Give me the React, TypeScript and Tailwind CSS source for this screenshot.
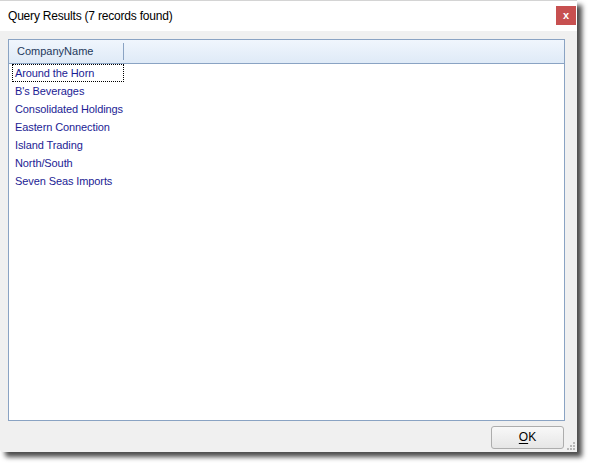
import React from "react";

const companies = [
  "Around the Horn",
  "B's Beverages",
  "Consolidated Holdings",
  "Eastern Connection",
  "Island Trading",
  "North/South",
  "Seven Seas Imports",
];

// Query results dialog
const App = () => {
  return (
    <div className="w-[592px] h-[468px] bg-white font-['Liberation_Sans',Arial,sans-serif]">
      <div className="w-[577px] h-[452px] flex flex-col bg-[#f0f0f0] rounded-bl-[3px] shadow-[5px_5px_5px_rgba(0,0,0,0.7)]">
        {/* Title bar */}
        <div className="h-[31px] shrink-0 flex items-center justify-between bg-white border-t border-[#d4d4d4] pl-2 pr-[1px]">
          <span className="text-[12px] tracking-[-0.2px] text-black leading-none pb-[1px]">
            Query Results (7 records found)
          </span>
          <button
            type="button"
            className="w-[20px] h-[19px] mt-[-2px] flex items-center justify-center bg-[#c75050] text-white text-[11px] font-bold leading-none"
          >
            x
          </button>
        </div>

        {/* Grid */}
        <div className="flex-1 flex flex-col pl-2 pr-3 pt-2">
          <div className="h-[382px] flex flex-col bg-white border border-[#8aa3c3]">
            <div className="h-[24px] shrink-0 flex items-center bg-gradient-to-b from-[#f0f6fd] to-[#dfeaf7] border-b border-[#8aa3c3]">
              <div className="w-[115px] h-[17px] flex items-center pl-2 border-r border-[#8aa3c3] text-[11px] text-[#1e395b]">
                CompanyName
              </div>
            </div>
            <div className="flex flex-col">
              {companies.map((name, i) => (
                <div key={name} className="h-[18px] flex items-center pl-[3px]">
                  <span
                    className={`min-w-[112px] h-[18px] flex items-center pl-[2px] whitespace-nowrap text-[11px] tracking-[-0.1px] text-[#1c1c94] ${
                      i === 0 ? "border border-dotted border-black" : "border border-transparent"
                    }`}
                  >
                    {name}
                  </span>
                </div>
              ))}
            </div>
          </div>

          {/* Footer */}
          <div className="flex-1 flex items-center justify-end relative">
            <button
              type="button"
              className="w-[73px] h-[23px] mr-[1px] mt-[1px] flex items-center justify-center rounded-[3px] border border-[#adadad] bg-gradient-to-b from-[#f8f8f8] to-[#e6e6e6] text-[12px] text-black"
            >
              <span>
                <span className="underline underline-offset-2">O</span>K
              </span>
            </button>
            <svg
              className="absolute right-[-11px] bottom-[1px]"
              width="9"
              height="9"
              viewBox="0 0 9 9"
            >
              {[
                [6, 0],
                [3, 3],
                [6, 3],
                [0, 6],
                [3, 6],
                [6, 6],
              ].map(([x, y]) => (
                <rect key={`${x}-${y}`} x={x} y={y} width="2" height="2" fill="#b8b8b8" />
              ))}
            </svg>
          </div>
        </div>
      </div>
    </div>
  );
};

export default App;
